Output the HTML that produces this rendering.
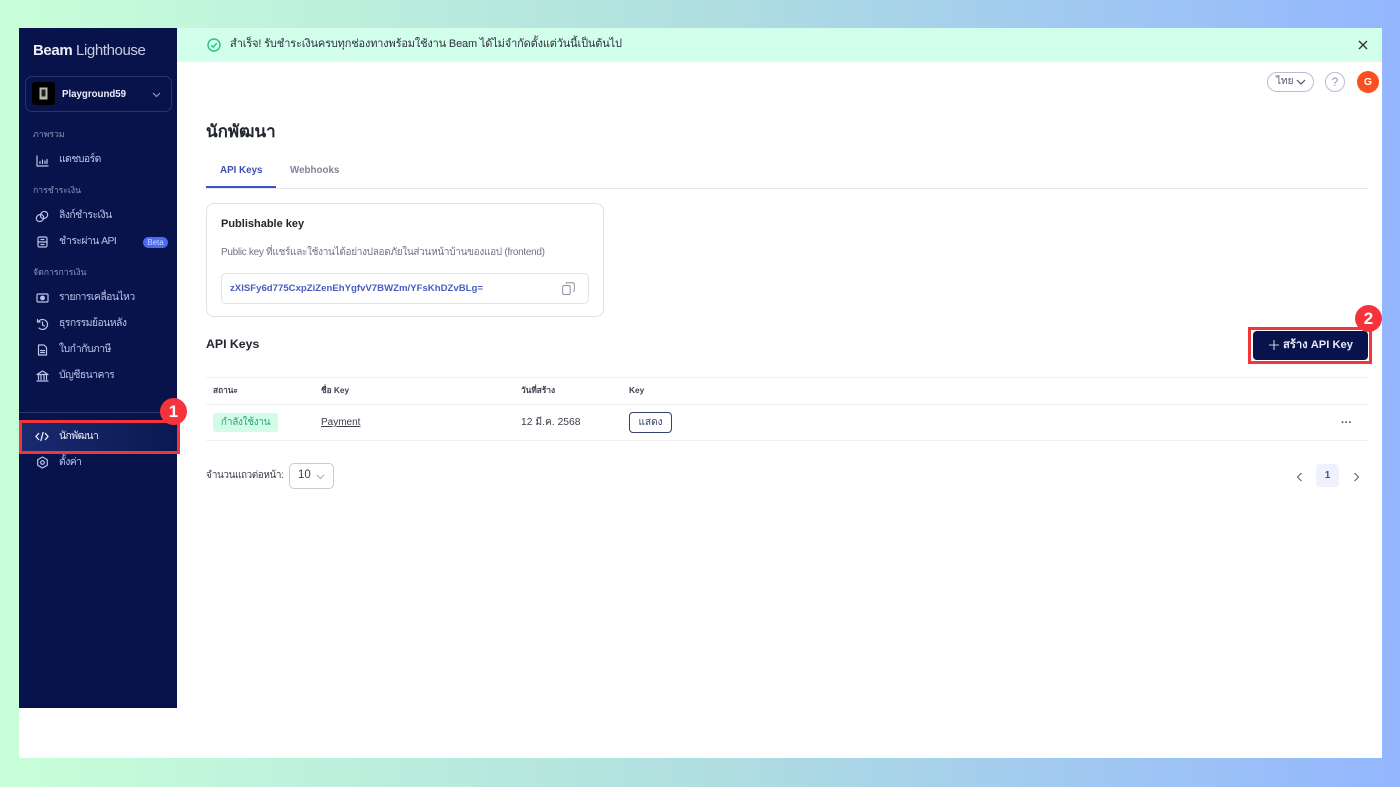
<!DOCTYPE html>
<html lang="th"><head><meta charset="utf-8"><title>Beam Lighthouse</title>
<style>
*{box-sizing:border-box}
html,body{margin:0;padding:0}
body{width:1400px;height:787px;overflow:hidden;position:relative;background:linear-gradient(90deg,#c8ffd9 0%,#b0dfe0 50%,#93b6ff 100%);font-family:"Liberation Sans","Noto Sans CJK SC",sans-serif;color:#1f2430}
.a{position:absolute;white-space:nowrap}
svg{position:absolute;display:block;fill:none}
.nav{color:#bcc4ec;font-size:10.4px;letter-spacing:-.55px;line-height:14px;left:59px}
.sec{color:#8d95bd;font-size:8.7px;line-height:12px;left:33px}
.ic{stroke:#bcc4ec;stroke-width:1.2;stroke-linecap:round;stroke-linejoin:round}
.th{font-size:8.3px;line-height:12px;color:#3c4150;top:384px;font-weight:bold}
.ln{left:206px;width:1162px;height:1px;background:#f0f1f4}
.red{border:3px solid #f0353b}
.badge{width:27px;height:27px;border-radius:50%;background:#f5333a;color:#fff;font:bold 17px/27px "Liberation Sans",sans-serif;text-align:center}
</style></head><body>
<div class="a" style="left:19px;top:28px;width:1363px;height:730px;background:#fff"></div>
<div class="a" style="left:177px;top:28px;width:1205px;height:34px;background:#d2ffec"></div>
<div class="a" style="left:19px;top:28px;width:158px;height:680px;background:#07134a"></div>

<div class="a" style="left:33px;top:41px;font-size:15px;line-height:20px;color:#eef0f8;letter-spacing:-.4px"><span style="font-weight:bold">Beam</span> <span style="color:#c9cee0">Lighthouse</span></div>
<div class="a" style="left:25px;top:76px;width:147px;height:36px;border:1px solid #2a3568;border-radius:7px"></div>
<div class="a" style="left:32px;top:82px;width:23px;height:23px;background:#000;border-radius:3px"></div>
<svg style="left:38px;top:87px" width="11" height="13" viewBox="0 0 11 13"><rect x="1.5" y=".5" width="8" height="12" fill="#b9b9b0"/><rect x="3.5" y="2.5" width="4" height="7" fill="#222"/></svg>
<div class="a" style="left:62px;top:88px;font-size:9.7px;line-height:14px;font-weight:bold;color:#eef0fa">Playground59</div>
<svg style="left:152px;top:92px" width="9" height="6" viewBox="0 0 9 6"><path d="M1 1l3.500 3.500L8 1" stroke="#9aa2c8" stroke-width="1.100"/></svg>

<div class="a sec" style="top:128px">ภาพรวม</div>
<svg class="ic" style="left:36px;top:154px" width="13" height="13" viewBox="0 0 13 13"><path d="M1 2v10h11M4 9.500V7.500M6.500 9.500V6M9 9.500V7M11 9.500V5.500"/></svg>
<div class="a nav" style="top:153px">แดชบอร์ด</div>
<div class="a sec" style="top:184px">การชำระเงิน</div>
<svg class="ic" style="left:35px;top:210px" width="14" height="13" viewBox="0 0 14 13"><ellipse cx="5" cy="8" rx="3.800" ry="3.400" transform="rotate(-35 5 8)"/><ellipse cx="9" cy="5" rx="3.800" ry="3.400" transform="rotate(-35 9 5)"/></svg>
<div class="a nav" style="top:209px">ลิงก์ชำระเงิน</div>
<svg class="ic" style="left:37px;top:236px" width="11" height="12" viewBox="0 0 11 12"><rect x="1" y="1" width="9" height="10" rx="1.500"/><path d="M1 6h9M4 3.500h3M4 8.500h3"/></svg>
<div class="a nav" style="top:235px">ชำระผ่าน API</div>
<div class="a" style="left:143px;top:237px;width:25px;height:11px;border-radius:6px;background:#4a6bf0;color:#c9d4ff;font-size:8px;line-height:11px;text-align:center">Beta</div>
<div class="a sec" style="top:266px">จัดการการเงิน</div>
<svg class="ic" style="left:36px;top:292px" width="13" height="12" viewBox="0 0 13 12"><rect x="1" y="2" width="11" height="8" rx="1"/><circle cx="6.500" cy="6" r="1.800" fill="#bcc4ec"/></svg>
<div class="a nav" style="top:291px">รายการเคลื่อนไหว</div>
<svg class="ic" style="left:36px;top:318px" width="13" height="13" viewBox="0 0 13 13"><path d="M2.500 3.500A5 5 0 1 1 3 10M1.500 1.500v2.500H4M6.500 4v3l2 1"/></svg>
<div class="a nav" style="top:317px">ธุรกรรมย้อนหลัง</div>
<svg class="ic" style="left:37px;top:344px" width="11" height="12" viewBox="0 0 11 12"><path d="M1.500 1h5.500l2.500 2.500V11h-8zM3.500 6.500h4M3.500 8.500h4"/></svg>
<div class="a nav" style="top:343px">ใบกำกับภาษี</div>
<svg class="ic" style="left:36px;top:370px" width="13" height="12" viewBox="0 0 13 12"><path d="M1 4.500 6.500 1 12 4.500zM2.500 5v4.500M5 5v4.500M8 5v4.500M10.500 5v4.500M1 11h11"/></svg>
<div class="a nav" style="top:369px">บัญชีธนาคาร</div>
<div class="a" style="left:19px;top:412px;width:158px;height:1px;background:#2e3868"></div>
<div class="a" style="left:21px;top:422px;width:156px;height:30px;background:linear-gradient(90deg,#1a2a70,#0b1850)"></div>
<svg style="left:35px;top:431px" width="14" height="11" viewBox="0 0 14 11"><path d="M4 2 1 5.500 4 9M10 2l3 3.500L10 9M8.200 1 5.800 10" stroke="#eef0fa" stroke-width="1.300"/></svg>
<div class="a nav" style="top:430px;color:#eef0fa">นักพัฒนา</div>
<svg class="ic" style="left:36px;top:456px" width="13" height="13" viewBox="0 0 13 13"><path d="M6.500 1l4.800 2.750v5.500L6.500 12l-4.800-2.750v-5.500z"/><circle cx="6.500" cy="6.500" r="1.800"/></svg>
<div class="a nav" style="top:456px">ตั้งค่า</div>
<div class="a red" style="left:19px;top:420px;width:161px;height:34px"></div>
<div class="a badge" style="left:160px;top:398px">1</div>

<svg style="left:207px;top:38px" width="14" height="14" viewBox="0 0 14 14"><circle cx="7" cy="7" r="6" stroke="#22c47e" stroke-width="1.400"/><path d="M4.300 7.200l2 2 3.500-4" stroke="#22c47e" stroke-width="1.400"/></svg>
<div class="a" style="left:230px;top:36px;font-size:11px;letter-spacing:-.16px;line-height:16px;color:#2b2f3a">สำเร็จ! รับชำระเงินครบทุกช่องทางพร้อมใช้งาน Beam ได้ไม่จำกัดตั้งแต่วันนี้เป็นต้นไป</div>
<svg style="left:1358px;top:40px" width="10" height="10" viewBox="0 0 10 10"><path d="M1 1l8 8M9 1 1 9" stroke="#2b2f3a" stroke-width="1.300"/></svg>

<div class="a" style="left:1267px;top:72px;width:47px;height:20px;border:1px solid #b9bdd2;border-radius:10px"></div>
<div class="a" style="left:1276px;top:75px;font-size:10px;line-height:14px;color:#4a5068">ไทย</div>
<svg style="left:1296px;top:79px" width="10" height="7" viewBox="0 0 10 7"><path d="M1 1l4 4 4-4" stroke="#4a5068" stroke-width="1.200"/></svg>
<div class="a" style="left:1325px;top:72px;width:20px;height:20px;border:1px solid #b9bdd2;border-radius:50%;color:#9297ad;font-size:12px;line-height:18px;text-align:center">?</div>
<div class="a" style="left:1357px;top:71px;width:22px;height:22px;border-radius:50%;background:#f9501f;color:#fff;font-size:10.5px;font-weight:bold;line-height:22px;text-align:center">G</div>

<div class="a" style="left:206px;top:121px;font-size:17px;line-height:22px;font-weight:bold;color:#22262f">นักพัฒนา</div>
<div class="a" style="left:220px;top:164px;font-size:9.8px;line-height:14px;font-weight:bold;color:#3f50b5">API Keys</div>
<div class="a" style="left:290px;top:164px;font-size:9.8px;line-height:14px;font-weight:bold;color:#7f8498">Webhooks</div>
<div class="a" style="left:206px;top:188px;width:1162px;height:1px;background:#e4e6ec"></div>
<div class="a" style="left:206px;top:186px;width:70px;height:2px;background:#3d52c4"></div>

<div class="a" style="left:206px;top:203px;width:398px;height:114px;border:1px solid #dfe1e8;border-radius:8px"></div>
<div class="a" style="left:221px;top:216px;font-size:11px;line-height:16px;font-weight:bold;color:#22262f">Publishable key</div>
<div class="a" style="left:221px;top:246px;font-size:10px;letter-spacing:-.3px;line-height:14px;color:#6f7484">Public key ที่แชร์และใช้งานได้อย่างปลอดภัยในส่วนหน้าบ้านของแอป (frontend)</div>
<div class="a" style="left:221px;top:273px;width:368px;height:31px;border:1px solid #e1e3ea;border-radius:5px"></div>
<div class="a" style="left:230px;top:282px;font-size:9.6px;line-height:14px;font-weight:bold;color:#4a5cc0">zXISFy6d775CxpZiZenEhYgfvV7BWZm/YFsKhDZvBLg=</div>
<svg style="left:562px;top:282px" width="13" height="13" viewBox="0 0 13 13"><rect x=".7" y="3.500" width="7.500" height="9" rx="1.500" stroke="#8b8f9e"/><path d="M4 1.800Q4 .7 5.200 .7h5.300q1.800 0 1.800 1.800v5.800q0 1.200-1.200 1.200" stroke="#8b8f9e"/></svg>

<div class="a" style="left:206px;top:336px;font-size:12.3px;line-height:16px;font-weight:bold;color:#22262f">API Keys</div>
<div class="a" style="left:1253px;top:331px;width:115px;height:29px;background:#07134a;border-radius:4px"></div>
<svg style="left:1269px;top:340px" width="10" height="10" viewBox="0 0 10 10"><path d="M5 0v10M0 5h10" stroke="#c6cbe0" stroke-width="1.100"/></svg>
<div class="a" style="left:1283px;top:337px;font-size:11.2px;line-height:16px;font-weight:bold;color:#e8ebf7">สร้าง API Key</div>
<div class="a red" style="left:1248px;top:327px;width:124px;height:37px"></div>
<div class="a badge" style="left:1355px;top:305px">2</div>

<div class="a ln" style="top:377px"></div>
<div class="a ln" style="top:404px"></div>
<div class="a ln" style="top:440px"></div>
<div class="a th" style="left:213px">สถานะ</div>
<div class="a th" style="left:321px">ชื่อ Key</div>
<div class="a th" style="left:521px">วันที่สร้าง</div>
<div class="a th" style="left:629px">Key</div>
<div class="a" style="left:213px;top:413px;width:65px;height:19px;border-radius:3px;background:#d2fbe8;color:#27a877;font-size:10px;letter-spacing:-.3px;line-height:19px;text-align:center">กำลังใช้งาน</div>
<div class="a" style="left:321px;top:416px;font-size:10px;line-height:14px;color:#3a3e4a;text-decoration:underline">Payment</div>
<div class="a" style="left:521px;top:416px;font-size:10.3px;line-height:14px;color:#3a3e4a">12 มี.ค. 2568</div>
<div class="a" style="left:629px;top:412px;width:43px;height:21px;border:1px solid #34406f;border-radius:4px;font-size:10px;line-height:19px;text-align:center;color:#34406f">แสดง</div>
<div class="a" style="left:1341px;top:417px;font-size:11px;line-height:12px;color:#4a4e5a;font-weight:bold">···</div>

<div class="a" style="left:206px;top:469px;font-size:10px;letter-spacing:-.45px;line-height:14px;color:#3a3e4a">จำนวนแถวต่อหน้า:</div>
<div class="a" style="left:289px;top:463px;width:45px;height:26px;border:1px solid #c9ccd6;border-radius:5px"></div>
<div class="a" style="left:298px;top:468px;font-size:11.5px;line-height:15px;color:#3a3e4a">10</div>
<svg style="left:316px;top:474px" width="9" height="6" viewBox="0 0 9 6"><path d="M1 1l3.500 3.500L8 1" stroke="#a6aab8"/></svg>
<svg style="left:1296px;top:472px" width="7" height="10" viewBox="0 0 7 10"><path d="M5.500 1 1.500 5l4 4" stroke="#666a78" stroke-width="1.200"/></svg>
<div class="a" style="left:1316px;top:464px;width:23px;height:23px;border-radius:4px;background:#eff2fd;color:#46528f;font-size:10px;font-weight:bold;line-height:23px;text-align:center">1</div>
<svg style="left:1353px;top:472px" width="7" height="10" viewBox="0 0 7 10"><path d="M1.500 1l4 4-4 4" stroke="#666a78" stroke-width="1.200"/></svg>
</body></html>
